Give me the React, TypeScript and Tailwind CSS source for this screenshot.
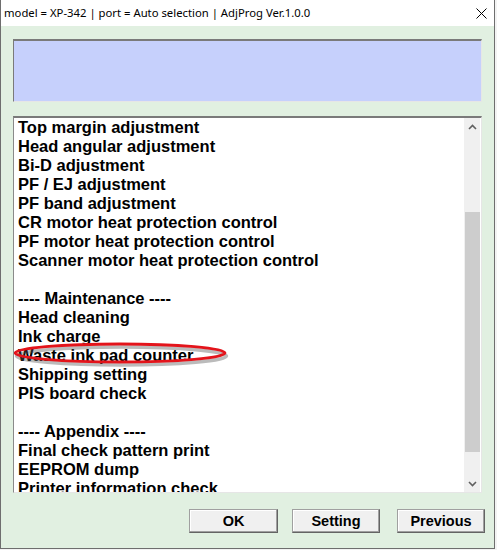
import React from "react";

const items: string[] = [
  "Top margin adjustment",
  "Head angular adjustment",
  "Bi-D adjustment",
  "PF / EJ adjustment",
  "PF band adjustment",
  "CR motor heat protection control",
  "PF motor heat protection control",
  "Scanner motor heat protection control",
  "",
  "---- Maintenance ----",
  "Head cleaning",
  "Ink charge",
  "Waste ink pad counter",
  "Shipping setting",
  "PIS board check",
  "",
  "---- Appendix ----",
  "Final check pattern print",
  "EEPROM dump",
  "Printer information check",
];

function Btn({ label, w }: { label: string; w: string }) {
  return (
    <button
      className={`${w} h-[24px] bg-[#f0f0f0] border border-t-[#a0a0a0] border-l-[#a0a0a0] border-r-[#646464] border-b-[#646464] shadow-[inset_-1px_-1px_0_#a0a0a0,inset_1px_1px_0_#ffffff] text-[14.5px] font-bold text-black leading-none flex items-center justify-center [font-family:'Liberation_Sans',Arial,sans-serif]`}
    >
      {label}
    </button>
  );
}

export default function App() {
  return (
    <div className="w-[497px] h-[550px] bg-[#f3f3f3] overflow-hidden">
      <div className="w-[495px] h-[549px] border border-t-0 border-[#6e6e6e] bg-[#e1f0e1] flex flex-col">
        <div className="h-[26px] bg-white flex items-center justify-between pl-[3px] pr-[7px] shrink-0">
          <span className="text-[11.3px] text-black [font-family:'Noto_Sans',sans-serif] leading-none">
            model = XP-342 | port = Auto selection | AdjProg Ver.1.0.0
          </span>
          <svg width="11" height="11" viewBox="0 0 11 11">
            <path d="M0.5 0.5 L10.5 10.5 M10.5 0.5 L0.5 10.5" stroke="#000" strokeWidth="1" />
          </svg>
        </div>
        <div className="px-[12px] pt-[13px] flex flex-col">
          <div className="h-[63px] bg-[#c6d0fc] border border-t-[#7a7a7a] border-l-[#7a7a7a] border-r-[#e6e6e6] border-b-[#e6e6e6] border-t-2"></div>
          <div className="mt-[14px] h-[377px] bg-white border border-t-2 border-t-[#7a7a7a] border-l-[#8a8a8a] border-r-[#e6e6e6] border-b-[#e6e6e6] flex relative overflow-hidden">
            <div className="flex-1 pl-[4px] [font-family:'Liberation_Sans',Arial,sans-serif] font-bold text-[16.5px] leading-[19px] text-black">
              {items.map((t, i) => (
                <div key={i} className="h-[19px] whitespace-nowrap">
                  {t}
                </div>
              ))}
            </div>
            <div className="w-[16px] bg-[#f0f0f0] flex flex-col items-center shrink-0 mr-[1px]">
              <div className="h-[17px] flex items-center justify-center">
                <svg width="9" height="6" viewBox="0 0 9 6">
                  <path d="M1 5 L4.5 1.5 L8 5" stroke="#606060" strokeWidth="1.6" fill="none" />
                </svg>
              </div>
              <div className="h-[77px]"></div>
              <div className="w-[15px] h-[240px] bg-[#cdcdcd]"></div>
              <div className="flex-1"></div>
              <div className="h-[17px] flex items-center justify-center">
                <svg width="9" height="6" viewBox="0 0 9 6">
                  <path d="M1 1 L4.5 4.5 L8 1" stroke="#606060" strokeWidth="1.6" fill="none" />
                </svg>
              </div>
            </div>
            <svg className="absolute left-[-2px] top-[222px]" width="220" height="30" viewBox="0 0 220 30">
              <ellipse cx="108" cy="14" rx="105" ry="9" fill="none" stroke="#555" strokeOpacity="0.4" strokeWidth="3.5" transform="translate(1.5,2)" />
              <ellipse cx="108" cy="13" rx="105" ry="9" fill="none" stroke="#e3141b" strokeWidth="2.8" />
            </svg>
          </div>
          <div className="flex justify-end mt-[16px] -mr-[3px]">
            <Btn label="OK" w="w-[89px]" />
            <div className="w-[14px]"></div>
            <Btn label="Setting" w="w-[88px]" />
            <div className="w-[17px]"></div>
            <Btn label="Previous" w="w-[88px]" />
          </div>
        </div>
      </div>
    </div>
  );
}
